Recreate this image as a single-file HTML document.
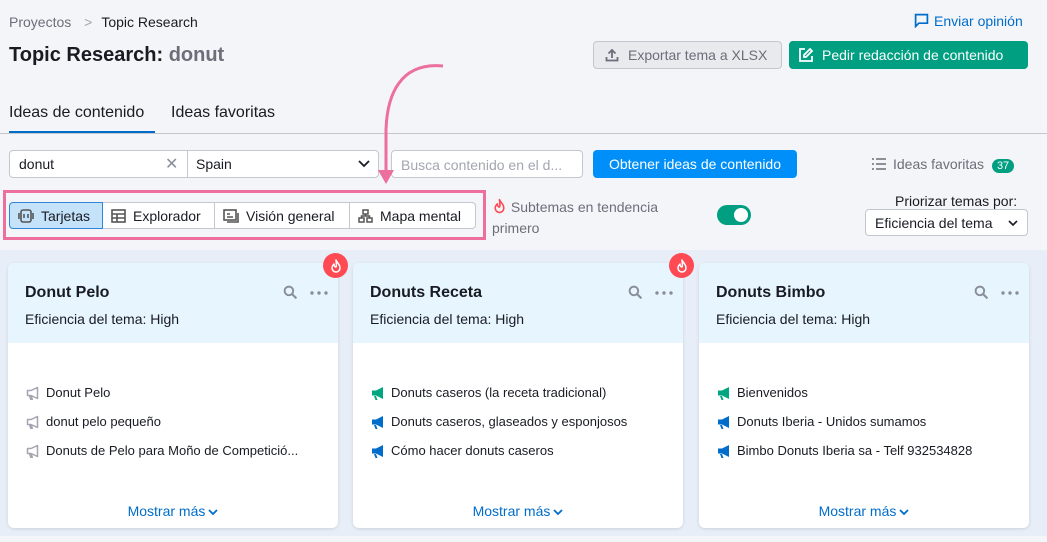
<!DOCTYPE html>
<html><head><meta charset="utf-8"><style>
*{box-sizing:border-box;margin:0;padding:0}
body{width:1047px;height:542px;overflow:hidden;background:#f4f5f9;font-family:"Liberation Sans",Arial,sans-serif;color:#191b23;position:relative;font-size:14px}
.a{position:absolute}
.btn{position:absolute;border-radius:4px;display:flex;align-items:center;font-size:14px;height:28px}
.card{position:absolute;top:263px;width:330px;height:265px;background:#fff;border-radius:6px;box-shadow:0 1px 3px rgba(0,0,0,.12);overflow:hidden}
.ch{height:80px;background:#e6f5fe;padding:21px 16px 0 17px}
.ch h3{font-size:16px;font-weight:bold;margin-bottom:9px}
.ch p{font-size:14px}
.li{position:absolute;left:18px;font-size:13px;display:flex;align-items:center;gap:6px;white-space:nowrap}
.more{position:absolute;top:240px;width:100%;text-align:center;color:#006dca;font-size:14px}
.fire{position:absolute;top:253px;width:25px;height:25px;border-radius:50%;background:#ff4953;display:flex;align-items:center;justify-content:center}
.seg{position:absolute;top:202px;height:27px;border:1px solid #c4c7cf;background:#fff;display:flex;align-items:center;gap:7px;padding:0 8px;font-size:14px}
.ic{position:absolute;right:10px;top:22px;display:flex;gap:12px;align-items:center}
</style></head><body>
<svg width="0" height="0" style="position:absolute"><defs>
<symbol id="mg" viewBox="0 0 14 14"><path d="M1 4.5h4l7-3.5v12l-7-3.5H1z M3 10l1.5 4h2l-1.5-4" /></symbol>
<symbol id="mo" viewBox="0 0 14 14"><path d="M1.5 4.5h3.5l6.5-3v11l-6.5-3H1.5z M3.5 9.5l1.3 4h1.5l-1.2-4" fill="none" stroke="#a3a6b0" stroke-width="1.5" stroke-linejoin="round"/></symbol>
<symbol id="fl" viewBox="0 0 14 14"><path d="M7 1C8 4 11 5 11 9a4 4 0 0 1-8 0c0-2 1-3 2-4 0 2 1 3 2 3 1-2 0-5 0-7z" fill="none" stroke="currentColor" stroke-width="1.5" stroke-linejoin="round"/></symbol>
<symbol id="sr" viewBox="0 0 14 14"><circle cx="5.5" cy="5.5" r="4" fill="none" stroke="#8a8e9b" stroke-width="1.8"/><path d="M8.5 8.5l4 4" stroke="#8a8e9b" stroke-width="2"/></symbol>
</defs></svg>
<div class="a" style="left:9px;top:14px;font-size:14px;color:#6c6e79">Proyectos <span style="margin:0 9px;color:#a3a6b0">&gt;</span><span style="color:#191b23">Topic Research</span></div>
<div class="a" style="left:9px;top:44px;font-size:20px;font-weight:bold">Topic Research: <span style="color:#6c6e79">donut</span></div>
<div class="a" style="left:914px;top:13px;color:#006dca;font-size:14px"><svg width="15" height="15" viewBox="0 0 14 14" style="vertical-align:-2px;margin-right:5px"><path d="M1.5 1.5h11v8h-8l-3 3z" fill="none" stroke="#006dca" stroke-width="1.6"/></svg>Enviar opinión</div>
<div class="btn" style="left:593px;top:41px;width:189px;background:#e9eaee;border:1px solid #c4c7cf;color:#6c6e79;padding-left:11px"><svg width="14" height="14" viewBox="0 0 14 14" style="margin-right:9px"><path d="M7 10V2M3.5 5.5L7 2l3.5 3.5M1.5 9v3.5h11V9" fill="none" stroke="#6c6e79" stroke-width="1.8"/></svg>Exportar tema a XLSX</div>
<div class="btn" style="left:789px;top:41px;width:239px;background:#009f81;color:#fff;padding-left:9px"><svg width="16" height="16" viewBox="0 0 16 16" style="margin-right:8px"><path d="M7 2H2v12h12V9M12 2l2 2-6 6H6V8z" fill="none" stroke="#fff" stroke-width="1.8"/></svg>Pedir redacción de contenido</div>
<div class="a" style="left:9px;top:104px;font-size:16px">Ideas de contenido</div>
<div class="a" style="left:171px;top:104px;font-size:16px">Ideas favoritas</div>
<div class="a" style="left:9px;top:131px;width:146px;height:3px;background:#006dca"></div>
<div class="a" style="left:0;top:133px;width:1047px;height:1px;background:#c4c7cf"></div>
<div class="a" style="left:9px;top:150px;width:370px;height:28px;background:#fff;border:1px solid #c4c7cf;border-radius:4px"></div>
<div class="a" style="left:187px;top:150px;width:1px;height:28px;background:#c4c7cf"></div>
<div class="a" style="left:19px;top:156px">donut</div>
<div class="a" style="left:165px;top:154px;color:#8a8e9b;font-size:16px">✕</div>
<div class="a" style="left:196px;top:156px">Spain</div>
<svg class="a" style="left:358px;top:160px" width="12" height="8"><path d="M1 1l5 5 5-5" fill="none" stroke="#191b23" stroke-width="1.8"/></svg>
<div class="a" style="left:391px;top:150px;width:192px;height:28px;background:#fff;border:1px solid #c4c7cf;border-radius:4px;color:#a3a6b0;padding:6px 9px">Busca contenido en el d...</div>
<div class="btn" style="left:593px;top:150px;width:204px;background:#008ff8;color:#fff;justify-content:center">Obtener ideas de contenido</div>
<div class="a" style="left:872px;top:156px;color:#6c6e79"><svg width="14" height="12" viewBox="0 0 14 12" style="vertical-align:-1px;margin-right:7px"><path d="M0 1h2M0 6h2M0 11h2M4 1h10M4 6h10M4 11h10" stroke="#6c6e79" stroke-width="1.6"/></svg>Ideas favoritas <span style="background:#009f81;color:#fff;font-size:11px;border-radius:8px;padding:1px 5px;margin-left:4px">37</span></div>
<div class="a" style="left:3px;top:190px;width:483px;height:50px;border:3px solid #ec6f9c"></div>
<div class="seg" style="left:9px;width:94px;background:#c4e3fa;border-color:#2e87d6;border-radius:4px 0 0 4px"><svg width="16" height="14"><rect x="3" y="1" width="10" height="12" rx="2" fill="none" stroke="#555" stroke-width="1.6"/><path d="M1 4v6M15 4v6M6 5v4M10 5v4" stroke="#555" stroke-width="1.6"/></svg>Tarjetas</div>
<div class="seg" style="left:103px;width:112px;border-left:none"><svg width="15" height="14"><rect x="1" y="1" width="13" height="12" fill="none" stroke="#555" stroke-width="1.6"/><path d="M1 5h13M1 9h13M6 5v8" stroke="#555" stroke-width="1.6"/></svg>Explorador</div>
<div class="seg" style="left:215px;width:135px;border-left:none"><svg width="16" height="14"><rect x="1" y="1" width="12" height="10" fill="none" stroke="#555" stroke-width="1.6"/><path d="M15 4v9H4M4 5h3M4 8h6" fill="none" stroke="#555" stroke-width="1.6"/></svg>Visión general</div>
<div class="seg" style="left:349px;width:127px;border-radius:0 4px 4px 0"><svg width="15" height="14"><rect x="5" y="1" width="5" height="4" fill="none" stroke="#555" stroke-width="1.5"/><rect x="1" y="9" width="5" height="4" fill="none" stroke="#555" stroke-width="1.5"/><rect x="9" y="9" width="5" height="4" fill="none" stroke="#555" stroke-width="1.5"/><path d="M7.5 5v2H3.5v2M7.5 7h4v2" fill="none" stroke="#555" stroke-width="1.5"/></svg>Mapa mental</div>
<div class="a" style="left:492px;top:197px;color:#6c6e79;line-height:21px"><svg width="15" height="16" style="color:#ff4953;vertical-align:-2px"><use href="#fl"/></svg> Subtemas en tendencia<br>primero</div>
<div class="a" style="left:717px;top:205px;width:34px;height:20px;border-radius:10px;background:#009f81"><div style="position:absolute;right:3px;top:3px;width:14px;height:14px;border-radius:50%;background:#fff"></div></div>
<div class="a" style="left:895px;top:193px;color:#191b23">Priorizar temas por:</div>
<div class="a" style="left:865px;top:209px;width:163px;height:27px;background:#fff;border:1px solid #c4c7cf;border-radius:4px;padding:5px 9px">Eficiencia del tema<svg width="10" height="7" style="position:absolute;right:9px;top:10px"><path d="M1 1l4 4 4-4" fill="none" stroke="#191b23" stroke-width="1.6"/></svg></div>
<svg class="a" style="left:0;top:0" width="1047" height="200"><path d="M443 66C400 62 387 95 386 130L386 172" fill="none" stroke="#ec6f9c" stroke-width="3"/><path d="M378 170L386 184L394 170z" fill="#ec6f9c"/></svg>
<div class="a" style="left:0;top:250px;width:1047px;height:292px;background:#e8eef8"></div>
<div class="a" style="left:0;top:536px;width:1047px;height:6px;background:#f4f5f9"></div>

<div class="card" style="left:8px"><div class="ch"><h3>Donut Pelo</h3><p>Eficiencia del tema: High</p></div>
<div class="ic"><svg width="15" height="15"><use href="#sr"/></svg><svg width="18" height="4"><circle cx="2" cy="2" r="1.7" fill="#8a8e9b"/><circle cx="9" cy="2" r="1.7" fill="#8a8e9b"/><circle cx="16" cy="2" r="1.7" fill="#8a8e9b"/></svg></div>
<div class="li" style="top:122px"><svg width="14" height="14"><use href="#mo"/></svg>Donut Pelo</div>
<div class="li" style="top:151px"><svg width="14" height="14"><use href="#mo"/></svg>donut pelo pequeño</div>
<div class="li" style="top:180px"><svg width="14" height="14"><use href="#mo"/></svg>Donuts de Pelo para Moño de Competició...</div>
<div class="more">Mostrar más<svg width="10" height="7" style="margin-left:3px"><path d="M1 1l4 4 4-4" fill="none" stroke="#006dca" stroke-width="1.8"/></svg></div></div>
<div class="card" style="left:353px"><div class="ch"><h3>Donuts Receta</h3><p>Eficiencia del tema: High</p></div>
<div class="ic"><svg width="15" height="15"><use href="#sr"/></svg><svg width="18" height="4"><circle cx="2" cy="2" r="1.7" fill="#8a8e9b"/><circle cx="9" cy="2" r="1.7" fill="#8a8e9b"/><circle cx="16" cy="2" r="1.7" fill="#8a8e9b"/></svg></div>
<div class="li" style="top:122px"><svg width="14" height="14" fill="#00a680"><use href="#mg"/></svg>Donuts caseros (la receta tradicional)</div>
<div class="li" style="top:151px"><svg width="14" height="14" fill="#006dca"><use href="#mg"/></svg>Donuts caseros, glaseados y esponjosos</div>
<div class="li" style="top:180px"><svg width="14" height="14" fill="#006dca"><use href="#mg"/></svg>Cómo hacer donuts caseros</div>
<div class="more">Mostrar más<svg width="10" height="7" style="margin-left:3px"><path d="M1 1l4 4 4-4" fill="none" stroke="#006dca" stroke-width="1.8"/></svg></div></div>
<div class="card" style="left:699px"><div class="ch"><h3>Donuts Bimbo</h3><p>Eficiencia del tema: High</p></div>
<div class="ic"><svg width="15" height="15"><use href="#sr"/></svg><svg width="18" height="4"><circle cx="2" cy="2" r="1.7" fill="#8a8e9b"/><circle cx="9" cy="2" r="1.7" fill="#8a8e9b"/><circle cx="16" cy="2" r="1.7" fill="#8a8e9b"/></svg></div>
<div class="li" style="top:122px"><svg width="14" height="14" fill="#00a680"><use href="#mg"/></svg>Bienvenidos</div>
<div class="li" style="top:151px"><svg width="14" height="14" fill="#006dca"><use href="#mg"/></svg>Donuts Iberia - Unidos sumamos</div>
<div class="li" style="top:180px"><svg width="14" height="14" fill="#006dca"><use href="#mg"/></svg>Bimbo Donuts Iberia sa - Telf 932534828</div>
<div class="more">Mostrar más<svg width="10" height="7" style="margin-left:3px"><path d="M1 1l4 4 4-4" fill="none" stroke="#006dca" stroke-width="1.8"/></svg></div></div>
<div class="fire" style="left:323px;color:#fff"><svg width="14" height="14"><use href="#fl"/></svg></div>
<div class="fire" style="left:669px;color:#fff"><svg width="14" height="14"><use href="#fl"/></svg></div>
</body></html>
